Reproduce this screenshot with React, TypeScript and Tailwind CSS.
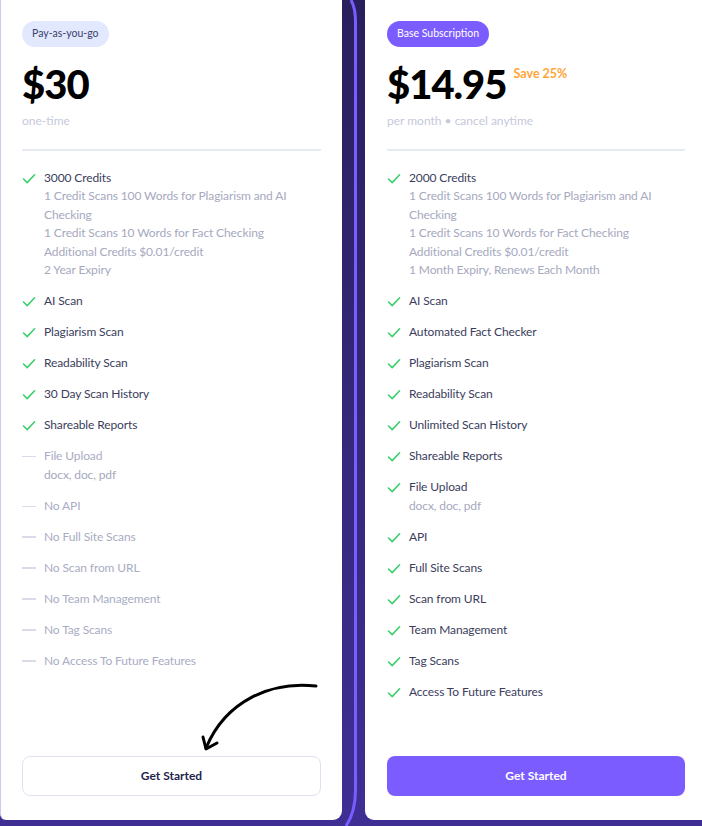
import React from "react";

type Item = { label: string; sub?: string[]; off?: boolean };

const leftItems: Item[] = [
  {
    label: "3000 Credits",
    sub: [
      "1 Credit Scans 100 Words for Plagiarism and AI",
      "Checking",
      "1 Credit Scans 10 Words for Fact Checking",
      "Additional Credits $0.01/credit",
      "2 Year Expiry",
    ],
  },
  { label: "AI Scan" },
  { label: "Plagiarism Scan" },
  { label: "Readability Scan" },
  { label: "30 Day Scan History" },
  { label: "Shareable Reports" },
  { label: "File Upload", sub: ["docx, doc, pdf"], off: true },
  { label: "No API", off: true },
  { label: "No Full Site Scans", off: true },
  { label: "No Scan from URL", off: true },
  { label: "No Team Management", off: true },
  { label: "No Tag Scans", off: true },
  { label: "No Access To Future Features", off: true },
];

const rightItems: Item[] = [
  {
    label: "2000 Credits",
    sub: [
      "1 Credit Scans 100 Words for Plagiarism and AI",
      "Checking",
      "1 Credit Scans 10 Words for Fact Checking",
      "Additional Credits $0.01/credit",
      "1 Month Expiry, Renews Each Month",
    ],
  },
  { label: "AI Scan" },
  { label: "Automated Fact Checker" },
  { label: "Plagiarism Scan" },
  { label: "Readability Scan" },
  { label: "Unlimited Scan History" },
  { label: "Shareable Reports" },
  { label: "File Upload", sub: ["docx, doc, pdf"] },
  { label: "API" },
  { label: "Full Site Scans" },
  { label: "Scan from URL" },
  { label: "Team Management" },
  { label: "Tag Scans" },
  { label: "Access To Future Features" },
];

function CheckIcon() {
  return (
    <svg width="14" height="18.6" viewBox="0 0 14 18.6" className="shrink-0">
      <path d="M1.5 10 L5.2 13.6 L12.6 5.8" fill="none" stroke="#3ccf6e" strokeWidth="1.6" strokeLinecap="round" strokeLinejoin="round" />
    </svg>
  );
}

function DashIcon() {
  return (
    <div className="w-[14px] h-[18.6px] shrink-0 flex items-center">
      <div className="w-[14px] h-[1.5px] bg-[#d9dbe8]" />
    </div>
  );
}

function Features({ items }: { items: Item[] }) {
  return (
    <div className="flex flex-col gap-[12.4px] mt-[18px]">
      {items.map((it, i) => (
        <div key={i} className="flex gap-[8px] text-[12px] leading-[18.6px] tracking-[-0.12px]">
          {it.off ? <DashIcon /> : <CheckIcon />}
          <div className="flex flex-col">
            <span className={it.off ? "text-[#a9acc3]" : "text-[#3b3d5c]"}>{it.label}</span>
            {it.sub?.map((s, j) => (
              <span key={j} className="text-[#a6a9c0]">
                {s}
              </span>
            ))}
          </div>
        </div>
      ))}
    </div>
  );
}

export default function App() {
  return (
    <div className="relative w-[702px] h-[826px] overflow-hidden bg-gradient-to-b from-[#2a1f5d] to-[#3f2f95] font-['Lato','Liberation_Sans',sans-serif]">
      <div className="flex h-[820px]">
        {/* Left card */}
        <div className="w-[342px] shrink-0 h-full bg-white border-l border-[#cfc9ef] rounded-bl-[6px] rounded-br-[9px] pl-[21px] pr-[21px] pt-[21px] pb-[24px] flex flex-col">
          <div className="self-start h-[26px] px-[10px] rounded-full bg-[#e2e8fd] text-[#3b3f6b] text-[10.5px] flex items-center">
            Pay-as-you-go
          </div>
          <div className="mt-[15px] flex items-start">
            <span className="text-[40px] leading-[44px] font-black text-black tracking-[-1px]">$30</span>
          </div>
          <div className="mt-[6px] text-[12px] leading-[18px] text-[#c6c8dc]">one-time</div>
          <div className="mt-[19px] h-[1.5px] bg-[#e6eaf1]" />
          <Features items={leftItems} />
          <button className="mt-auto h-[40px] w-full rounded-[8px] border border-[#dfe2f1] bg-white text-[12px] font-bold text-[#221f4d]">
            Get Started
          </button>
        </div>

        {/* Middle strip */}
        <div className="w-[23px] shrink-0 relative">
          <svg width="23" height="826" viewBox="0 0 23 826" className="absolute left-0 top-0">
            <path d="M9 0 Q13.5 8 13.5 22 L13.5 790 Q13.5 812 4 826" fill="none" stroke="#7b5cff" strokeWidth="3" />
          </svg>
        </div>

        {/* Right card */}
        <div className="w-[342px] shrink-0 h-full bg-white rounded-bl-[9px] pl-[22px] pr-[22px] pt-[21px] pb-[24px] flex flex-col">
          <div className="self-start h-[26px] px-[10px] rounded-full bg-[#7b5cff] text-white text-[10.5px] flex items-center">
            Base Subscription
          </div>
          <div className="mt-[15px] flex items-start gap-[7px]">
            <span className="text-[40px] leading-[44px] font-black text-black tracking-[-1px]">$14.95</span>
            <span className="mt-[3px] text-[12.5px] font-bold text-[#ffa53a]">Save 25%</span>
          </div>
          <div className="mt-[6px] text-[12px] leading-[18px] text-[#c6c8dc]">per month • cancel anytime</div>
          <div className="mt-[19px] h-[1.5px] bg-[#e6eaf1]" />
          <Features items={rightItems} />
          <button className="mt-auto h-[40px] w-full rounded-[8px] bg-[#7b5cff] text-[12px] font-bold text-white">
            Get Started
          </button>
        </div>
      </div>

      {/* Arrow */}
      <svg width="702" height="826" viewBox="0 0 702 826" className="absolute left-0 top-0 pointer-events-none">
        <path d="M316 686 C 272 681, 226 700, 206 748" fill="none" stroke="#000" strokeWidth="3" strokeLinecap="round" />
        <path d="M203 737 L206 749 L217 743" fill="none" stroke="#000" strokeWidth="3" strokeLinecap="round" strokeLinejoin="round" />
      </svg>
    </div>
  );
}
